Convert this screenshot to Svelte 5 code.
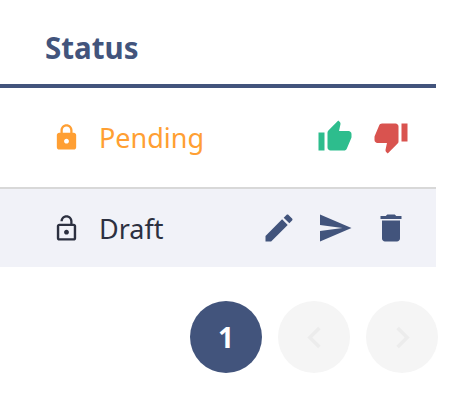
<script>
  const icons = {
    lock: 'M18 8h-1V6c0-2.76-2.24-5-5-5S7 3.24 7 6v2H6c-1.1 0-2 .9-2 2v10c0 1.1.9 2 2 2h12c1.1 0 2-.9 2-2V10c0-1.1-.9-2-2-2zm-6 9c-1.1 0-2-.9-2-2s.9-2 2-2 2 .9 2 2-.9 2-2 2zm3.1-9H8.9V6c0-1.71 1.39-3.1 3.1-3.1 1.71 0 3.1 1.39 3.1 3.1v2z',
    open: 'M12 17c1.1 0 2-.9 2-2s-.9-2-2-2-2 .9-2 2 .9 2 2 2zm6-9h-1V6c0-2.76-2.24-5-5-5S7 3.24 7 6h1.9c0-1.71 1.39-3.1 3.1-3.1 1.71 0 3.1 1.39 3.1 3.1v2H6c-1.1 0-2 .9-2 2v10c0 1.1.9 2 2 2h12c1.1 0 2-.9 2-2V10c0-1.1-.9-2-2-2zm0 12H6V10h12v10z',
    up: 'M1 21h4V9H1v12zm22-11c0-1.1-.9-2-2-2h-6.31l.95-4.57.03-.32c0-.41-.17-.79-.44-1.06L14.17 1 7.59 7.59C7.22 7.95 7 8.45 7 9v10c0 1.1.9 2 2 2h9c.83 0 1.54-.5 1.84-1.22l3.02-7.05c.09-.23.14-.47.14-.73v-2z',
    down: 'M15 3H6c-.83 0-1.54.5-1.84 1.22l-3.02 7.05c-.09.23-.14.47-.14.73v2c0 1.1.9 2 2 2h6.31l-.95 4.57-.03.32c0 .41.17.79.44 1.06L9.83 23l6.59-6.59c.36-.36.58-.86.58-1.41V5c0-1.1-.9-2-2-2zm4 0v12h4V3h-4z',
    edit: 'M3 17.25V21h3.75L17.81 9.94l-3.75-3.75L3 17.25zM20.71 7.04c.39-.39.39-1.02 0-1.41l-2.34-2.34c-.39-.39-1.02-.39-1.41 0l-1.83 1.83 3.75 3.75 1.83-1.83z',
    send: 'M2.01 21L23 12 2.01 3 2 10l15 2-15 2z',
    del: 'M6 19c0 1.1.9 2 2 2h8c1.1 0 2-.9 2-2V7H6v12zM19 4h-3.5l-1-1h-5l-1 1H5v2h14V4z',
    prev: 'M15.41 7.41L14 6l-6 6 6 6 1.41-1.41L10.83 12z',
    next: 'M10 6L8.59 7.41 13.17 12l-4.58 4.59L10 18l6-6z'
  };
</script>

{#snippet icon(name, cls)}
  <svg class={cls} viewBox="0 0 24 24" aria-hidden="true"><path d={icons[name]} /></svg>
{/snippet}

<div class="page">
  <div class="table">
    <div class="head">Status</div>
    <div class="row pending">
      <div class="state">
        {@render icon('lock', 'small')}
        <span>Pending</span>
      </div>
      <div class="actions">
        {@render icon('up', 'big green')}
        {@render icon('down', 'big red')}
      </div>
    </div>
    <div class="row draft">
      <div class="state">
        {@render icon('open', 'small')}
        <span>Draft</span>
      </div>
      <div class="actions">
        {@render icon('edit', 'big navy')}
        {@render icon('send', 'big navy')}
        {@render icon('del', 'big navy')}
      </div>
    </div>
  </div>
  <div class="pager">
    <button class="pg current">1</button>
    <button class="pg off" aria-label="Previous">{@render icon('prev', 'chev')}</button>
    <button class="pg off" aria-label="Next">{@render icon('next', 'chev')}</button>
  </div>
</div>

<style>
  :global(body) {
    background: #fff;
  }
  .page {
    width: 454px;
    height: 400px;
    overflow: hidden;
    font-family: "Noto Sans", "Open Sans", sans-serif;
  }
  .table {
    width: 436px;
  }
  .head {
    box-sizing: content-box;
    height: 56px;
    padding: 28px 0 0 45px;
    font-size: 29.5px;
    line-height: 40px;
    font-weight: 700;
    color: #42547c;
    border-bottom: 4px solid #42547c;
  }
  .row {
    display: flex;
    align-items: center;
    justify-content: space-between;
    box-sizing: border-box;
    padding: 0 27.5px 0 52px;
  }
  .pending {
    height: 101px;
    color: #ff9f33;
    border-bottom: 2px solid #d8d8d8;
  }
  .draft {
    height: 78px;
    background: #f1f2f8;
    color: #2c3040;
  }
  .state {
    display: flex;
    align-items: center;
    gap: 18px;
    font-size: 27px;
  }
  .actions {
    display: flex;
    gap: 20px;
    margin-top: -1px;
  }
  svg {
    display: block;
    fill: currentColor;
  }
  .small {
    width: 29px;
    height: 29px;
  }
  .big {
    width: 36px;
    height: 36px;
  }
  .green {
    color: #2dbd8d;
  }
  .red {
    color: #d9534f;
  }
  .navy {
    color: #42547c;
  }
  .pager {
    display: flex;
    justify-content: flex-end;
    gap: 16px;
    padding: 34px 16px 0 0;
  }
  .pg {
    width: 72px;
    height: 72px;
    flex: none;
    padding: 0;
    border: 0;
    border-radius: 50%;
    display: flex;
    align-items: center;
    justify-content: center;
    font-family: inherit;
  }
  .current {
    background: #42547c;
    color: #fff;
    font-size: 28px;
    font-weight: 700;
  }
  .off {
    background: #f5f5f5;
    color: #ececec;
  }
  .chev {
    width: 43px;
    height: 43px;
  }
</style>
